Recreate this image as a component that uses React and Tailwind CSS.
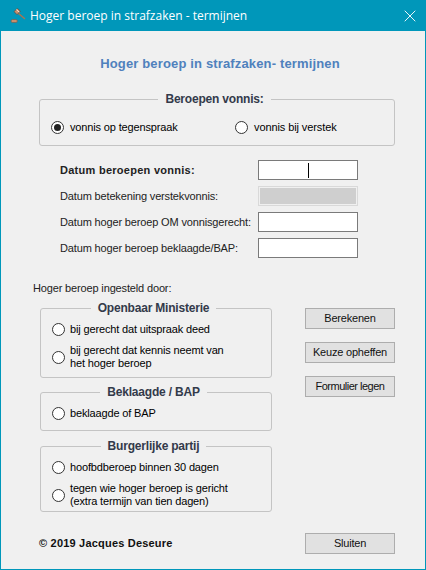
import React from "react";
import { X } from "lucide-react";

const sans = "font-['Liberation_Sans',Arial,sans-serif]";

// Gavel icon from the title bar
const Gavel = () => (
  <svg width="16" height="16" viewBox="0 0 16 16" className="shrink-0">
    <path d="M8.5 5.5 L14.5 10.5" stroke="#a8744f" strokeWidth="1.5" strokeLinecap="round" />
    <path d="M4 3.6 L7.4 0.4 L10.4 3.2 L7 6.6 Z" fill="#c98f6b" stroke="#5b4a40" strokeWidth="0.7" />
    <path d="M6.4 1.6 L9.2 4.2" stroke="#f4e3d6" strokeWidth="1" />
    <rect x="1" y="11.5" width="6.4" height="3" rx="1.5" fill="#c98f6b" stroke="#6f5a4c" strokeWidth="0.6" />
  </svg>
);

const Radio = ({ checked = false }) => (
  <span className="w-[13px] h-[13px] rounded-full border border-[#333333] bg-white flex items-center justify-center shrink-0">
    {checked && <span className="w-[7px] h-[7px] rounded-full bg-[#222222]" />}
  </span>
);

const RadioRow = ({ children, checked, className = "gap-[5px]", textClass = "" }) => (
  <div className={`flex items-center ${className}`}>
    <Radio checked={checked} />
    <span className={`leading-[13px] text-black ${textClass}`}>{children}</span>
  </div>
);

const Group = ({ title, className = "", children }) => (
  <div className={`relative border border-[#c4c4c4] rounded-[3px] ${className}`}>
    <span className="absolute -top-[8px] left-0 right-[5px] flex justify-center">
      <span className="bg-[#f0f0f0] px-[7px] font-bold text-[12px] tracking-[-0.2px] leading-[15px] text-[#333a4a]">
        {title}
      </span>
    </span>
    {children}
  </div>
);

const DateRow = ({ label, bold, disabled, caret }) => (
  <div className="flex items-center h-[20px] pl-[21px] w-[319px] justify-between">
    <span className={bold ? "font-bold tracking-[0.27px] text-[#222222]" : "text-[#222222]"}>{label}</span>
    <span
      className={`w-[100px] h-[20px] border flex items-center justify-center ${
        disabled ? "border-[#d9d9d9] bg-[#cfcfcf] outline outline-1 -outline-offset-2 outline-[#f0f0f0]" : "border-[#7a7a7a] bg-white"
      }`}
    >
      {caret && <span className="w-px h-[15px] bg-black" />}
    </span>
  </div>
);

const Btn = ({ children, spacing = "tracking-[-0.2px]" }) => (
  <button className={`w-[90px] h-[21px] border border-[#adadad] bg-[#e1e1e1] text-[#111111] text-[11px] leading-none ${spacing}`}>
    {children}
  </button>
);

export default function App() {
  return (
    <div className={`${sans} w-[426px] h-[570px] flex flex-col bg-[#f0f0f0] text-[11px] tracking-[-0.15px] border-x border-b border-[#0097ba] overflow-hidden`}>
      {/* Title bar */}
      <div className="h-[31px] -mx-px shrink-0 bg-[#0097ba] flex items-center pl-[10px] pr-[6px] text-white">
        <Gavel />
        <span className="ml-[4px] font-['Open_Sans',sans-serif] text-[12px] tracking-normal">Hoger beroep in strafzaken - termijnen</span>
        <X size={20} strokeWidth={1.1} className="ml-auto" />
      </div>

      <div className="flex-1 flex flex-col pl-[38px]">
        <h1 className="mt-[25px] h-[16px] -ml-[24px] text-center text-[13px] leading-[16px] font-bold tracking-[0.15px] text-[#4f81bd]">
          Hoger beroep in strafzaken- termijnen
        </h1>

        <Group title="Beroepen vonnis:" className="mt-[27px] w-[356px] h-[47px] flex items-center pt-[10px] pl-[11px]">
          <RadioRow checked className="gap-[6px] w-[184px]">vonnis op tegenspraak</RadioRow>
          <RadioRow className="gap-[6px]" textClass="tracking-[-0.1px]">vonnis bij verstek</RadioRow>
        </Group>

        <div className="mt-[14px] flex flex-col gap-[6px]">
          <DateRow bold caret label="Datum beroepen vonnis:" />
          <DateRow disabled label="Datum betekening verstekvonnis:" />
          <DateRow label="Datum hoger beroep OM vonnisgerecht:" />
          <DateRow label="Datum hoger beroep beklaagde/BAP:" />
        </div>

        <p className="mt-[24px] -ml-[6px] h-[13px] leading-[13px] text-[#222222]">Hoger beroep ingesteld door:</p>

        <div className="mt-[13px] flex">
          <div className="w-[232px] ml-px flex flex-col">
            <Group title="Openbaar Ministerie" className="h-[70px] pl-[11px] pt-[14px]">
              <RadioRow>bij gerecht dat uitspraak deed</RadioRow>
              <RadioRow className="gap-[5px] mt-[8px]">
                bij gerecht dat kennis neemt van
                <br />
                het hoger beroep
              </RadioRow>
            </Group>
            <Group title="Beklaagde / BAP" className="mt-[14px] h-[39px] pl-[11px] pt-[14px]">
              <RadioRow>beklaagde of BAP</RadioRow>
            </Group>
            <Group title="Burgerlijke partij" className="mt-[15px] h-[66px] pl-[11px] pt-[14px]">
              <RadioRow>hoofbdberoep binnen 30 dagen</RadioRow>
              <RadioRow className="gap-[5px] mt-[8px]">
                tegen wie hoger beroep is gericht
                <br />
                (extra termijn van tien dagen)
              </RadioRow>
            </Group>
          </div>
          <div className="ml-[33px] flex flex-col gap-[13px]">
            <Btn>Berekenen</Btn>
            <Btn>Keuze opheffen</Btn>
            <Btn spacing="tracking-[-0.5px]">Formulier legen</Btn>
          </div>
        </div>

        <div className="mt-[21px] flex items-center justify-between w-[356px]">
          <span className="font-bold text-[#111111] tracking-[0.2px]">© 2019 Jacques Deseure</span>
          <Btn>Sluiten</Btn>
        </div>
      </div>
    </div>
  );
}
